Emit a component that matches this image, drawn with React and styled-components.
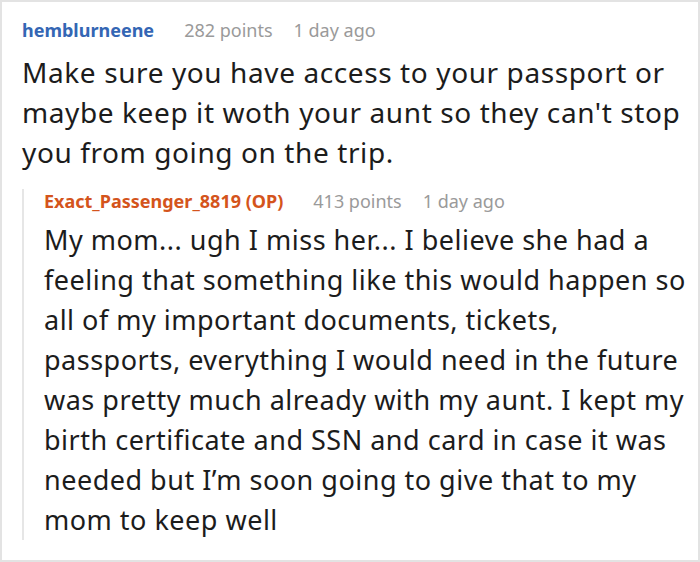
import React from "react";
import styled, { createGlobalStyle } from "styled-components";

const GlobalStyle = createGlobalStyle`
  html, body {
    margin: 0;
    padding: 0;
    background: #ffffff;
  }
  body {
    font-family: "Noto Sans", "Open Sans", sans-serif;
  }
`;

const Frame = styled.div`
  width: 700px;
  height: 562px;
  box-sizing: border-box;
  border: 2px solid #e3e3e3;
  background: #fff;
  padding: 16px 0 0 20px;
  overflow: hidden;
`;

const Comment = styled.div`
  display: flex;
  flex-direction: column;
`;

const Meta = styled.div`
  display: flex;
  align-items: baseline;
  height: 24px;
  font-size: 18px;
  line-height: 24px;
  color: #9a9a9a;
  white-space: nowrap;
`;

const Author = styled.span`
  font-weight: 700;
  margin-right: 30px;
  color: ${props => (props.$op ? "#d4541c" : "#3466b4")};
`;

const Points = styled.span`
  margin-right: 21px;
`;

const Body = styled.p`
  margin: ${props => props.$gap}px 0 0;
  font-size: ${props => props.$size}px;
  letter-spacing: ${props => props.$spacing}px;
  line-height: 40px;
  color: #1c1c1c;
  width: ${props => props.$width}px;
`;

const Reply = styled.div`
  margin-top: 17px;
  border-left: 2px solid #e6e6e6;
  padding-left: 20px;
`;

export default function App() {
  return (
    <>
      <GlobalStyle />
      <Frame>
        <Comment>
          <Meta>
            <Author>hemblurneene</Author>
            <Points>282 points</Points>
            <span>1 day ago</span>
          </Meta>
          <Body $gap={10} $width={660} $size={28} $spacing={0.6}>
            Make sure you have access to your passport or maybe keep it woth
            your aunt so they can't stop you from going on the trip.
          </Body>
          <Reply>
            <Comment>
              <Meta>
                <Author $op>Exact_Passenger_8819 (OP)</Author>
                <Points>413 points</Points>
                <span>1 day ago</span>
              </Meta>
              <Body $gap={7} $width={648} $size={27} $spacing={0.5}>
                My mom... ugh I miss her... I believe she had a feeling that
                something like this would happen so all of my important
                documents, tickets, passports, everything I would need in the
                future was pretty much already with my aunt. I kept my birth
                certificate and SSN and card in case it was needed but I’m soon
                going to give that to my mom to keep well
              </Body>
            </Comment>
          </Reply>
        </Comment>
      </Frame>
    </>
  );
}
